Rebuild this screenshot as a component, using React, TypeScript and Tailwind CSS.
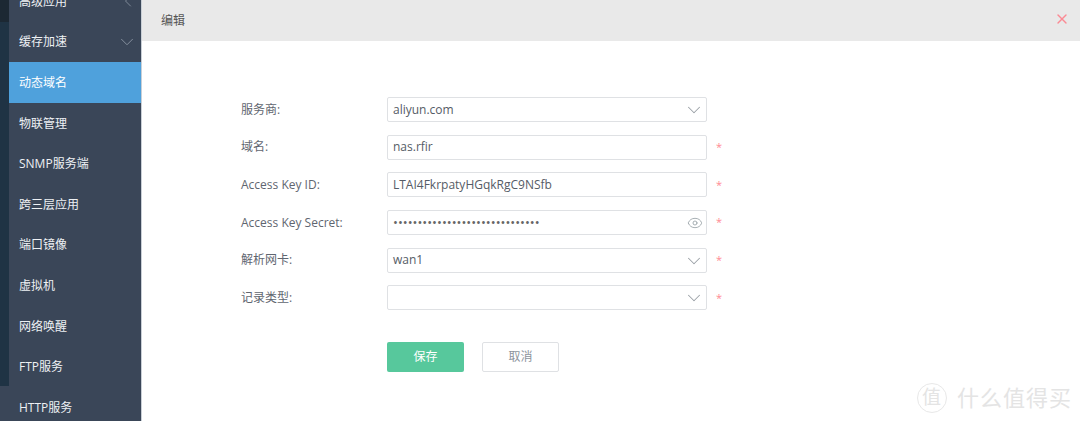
import { ChevronDown, ChevronLeft, Eye, X } from "lucide-react";

const menuItems = ["缓存加速", "动态域名", "物联管理", "SNMP服务端", "跨三层应用", "端口镜像", "虚拟机", "网络唤醒", "FTP服务", "HTTP服务"];

type Field = {
  label: string;
  value: string;
  kind: "select" | "text" | "password";
  required: boolean;
};

const fields: Field[] = [
  { label: "服务商:", value: "aliyun.com", kind: "select", required: false },
  { label: "域名:", value: "nas.rfir", kind: "text", required: true },
  { label: "Access Key ID:", value: "LTAI4FkrpatyHGqkRgC9NSfb", kind: "text", required: true },
  { label: "Access Key Secret:", value: "••••••••••••••••••••••••••••••", kind: "password", required: true },
  { label: "解析网卡:", value: "wan1", kind: "select", required: true },
  { label: "记录类型:", value: "", kind: "select", required: true },
];

function Sidebar() {
  return (
    <div className="h-full w-[142px] shrink-0 flex overflow-hidden border-r border-[#c9cfd6]">
      <div className="w-[9px] shrink-0 flex flex-col bg-[#3a4658]">
        <div className="h-[22px] bg-[#1c2833]" />
        <div className="h-[364px] bg-[#1f3344]" />
      </div>
      <div className="flex-1 bg-[#3a4658] -mt-[19px] text-[12px] text-[#eef1f4]">
        <div className="h-[40.6px] flex items-center justify-between pl-[10px] pr-[3px]">
          <span className="mt-[1px]">高级应用</span>
          <ChevronLeft className="w-[20px] h-[20px] text-[#8b95a3]" strokeWidth={1} />
        </div>
        {menuItems.map((item, i) => (
          <div
            key={item}
            className={`h-[40.6px] flex items-center justify-between pl-[10px] pr-[3px] ${i === 1 ? "bg-[#4fa1dc] text-white" : ""}`}
          >
            <span className="mt-[1px]">{item}</span>
            {i === 0 && <ChevronDown className="w-[22px] h-[22px] text-[#8b95a3]" strokeWidth={1} />}
          </div>
        ))}
      </div>
    </div>
  );
}

function FormRow({ field }: { field: Field }) {
  return (
    <div className="h-[37.7px] flex items-start">
      <label className="w-[146px] h-[25px] flex items-center text-[12px] text-[#5f6670]">{field.label}</label>
      <div className="relative w-[320px] h-[25px] flex items-center rounded-[2px] border border-[#dfe1e4] bg-white pl-[5px] text-[12px] text-[#555c66]">
        <span className={field.kind === "password" ? "text-[13px] text-[#666]" : ""}>{field.value}</span>
        {field.kind === "select" && (
          <ChevronDown className="absolute right-[1px] top-[1px] w-[22px] h-[22px] text-[#9aa0a6]" strokeWidth={1.1} />
        )}
        {field.kind === "password" && (
          <Eye className="absolute right-[3px] top-[4px] w-[16px] h-[16px] text-[#9aa3a8]" strokeWidth={1.3} />
        )}
      </div>
      {field.required && (
        <span className="ml-[9px] h-[25px] flex items-center text-[11px] text-[#ff8a94]">*</span>
      )}
    </div>
  );
}

export default function App() {
  return (
    <div className="w-[1080px] h-[421px] flex overflow-hidden bg-white font-['Open_Sans','Noto_Sans_CJK_SC',sans-serif]">
      <Sidebar />
      <div className="relative flex-1 flex flex-col">
        <div className="relative h-[41px] shrink-0 flex items-center bg-[#e9e9e9] pl-[19px] text-[12px] text-[#555]">
          <span>编辑</span>
          <X className="absolute right-[10px] top-[11px] w-[16px] h-[16px] text-[#fb8a94]" strokeWidth={2} />
        </div>
        <div className="pl-[99px] pt-[56px]">
          {fields.map((field) => (
            <FormRow key={field.label} field={field} />
          ))}
          <div className="pl-[146px] pt-[19px] flex gap-[18px] text-[12px]">
            <button className="w-[77px] h-[30px] rounded-[2px] bg-[#57c89c] text-white">保存</button>
            <button className="w-[77px] h-[30px] rounded-[2px] border border-[#dfe1e4] bg-white text-[#8d949c]">取消</button>
          </div>
        </div>
        <div className="absolute right-[8px] bottom-[7px] flex items-center gap-[10px] text-[22px] text-[#e4e4e4] tracking-[1px]">
          <span className="w-[30px] h-[30px] rounded-full border border-[#e8e8e8] flex items-center justify-center text-[19px]">值</span>
          <span>什么值得买</span>
        </div>
      </div>
    </div>
  );
}
